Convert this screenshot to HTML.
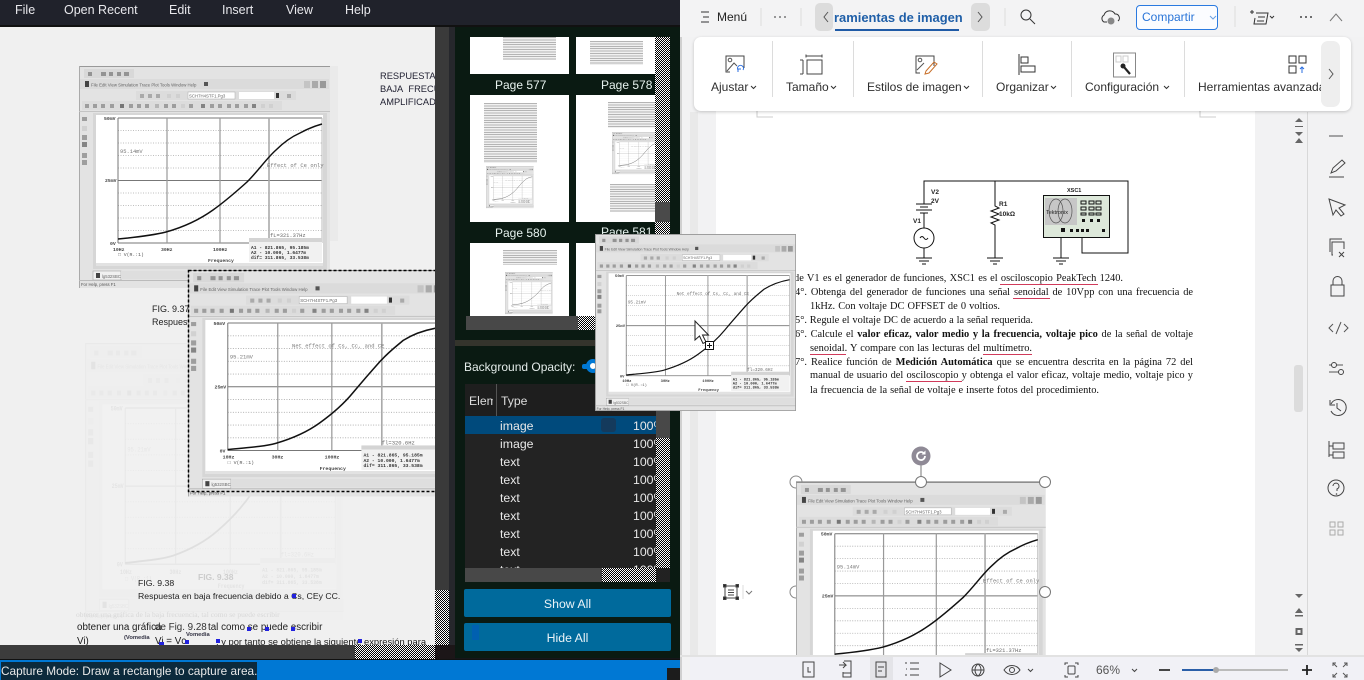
<!DOCTYPE html>
<html lang="es"><head><meta charset="utf-8"><title>Capture</title>
<style>
html,body{margin:0;padding:0;width:1364px;height:680px;overflow:hidden;background:#f1f1f1}
body{font-family:"Liberation Sans",sans-serif;position:relative}
.a{position:absolute}
.chk{background:repeating-conic-gradient(#000 0 25%,#fff 0 50%) 0 0/2px 2px}
.t{position:absolute;white-space:nowrap}
.row{position:absolute;left:465px;width:191px;height:18px;background:#232323;color:#e8e8e8;font-size:12.3px;line-height:20px;overflow:hidden}
.row b{position:absolute;left:35px;font-weight:normal}
.row i{position:absolute;left:168px;font-style:normal}
.lines{position:absolute;background:repeating-linear-gradient(#b4b4b4 0 1px,#f0f0f0 1px 2.4px)}
.thumb{position:absolute;background:#fff;overflow:hidden}
.pl{position:absolute;color:#e6f2ee;font-size:12px;line-height:14px}
.btn{position:absolute;left:464px;width:207px;height:28px;background:#006a9c;border-radius:2px;color:#eaf3f7;font-size:12.3px;line-height:30px;text-align:center}
.mn{position:absolute;top:3px;color:#e8e8ec;font-size:12.5px;line-height:14px}
.rb{position:absolute;top:80px;font-size:12px;line-height:15px;color:#2e2e2e;white-space:nowrap}
.sep{position:absolute;width:1px;background:#dcdcdc}
.d{position:absolute;font:10.4px/12px "Liberation Serif",serif;color:#111;white-space:nowrap;text-align:justify;text-align-last:justify}
.u{position:absolute;height:1px;background:#d03a5a}
svg{position:absolute;overflow:visible}
</style></head><body>

<svg width="0" height="0" style="left:0;top:0">
<defs>
<symbol id="chrome" viewBox="0 0 251 222" width="251" height="222" overflow="visible">
<rect x="0" y="0" width="251" height="222" fill="#e3e3e3"/>
<rect x="0" y="0" width="251" height="1" fill="#999"/><rect x="0" y="0" width="1" height="222" fill="#aaa"/>
<rect x="5" y="3" width="50" height="9" fill="#d8d8d8"/>
<g fill="#777" opacity=".7"><rect x="9" y="6" width="4" height="4"/><rect x="22" y="6" width="5" height="4"/><rect x="30" y="6" width="4" height="4"/><rect x="38" y="6" width="4" height="4"/><rect x="45" y="6" width="5" height="4"/></g>
<rect x="1" y="13" width="249" height="10" fill="#dbdbdb"/>
<rect x="6" y="15" width="4" height="6" fill="#444"/>
<text x="12" y="20.500" font-family="Liberation Sans" font-size="4.300" fill="#666">File  Edit  View  Simulation  Trace  Plot  Tools  Window  Help</text>
<rect x="125" y="16" width="4" height="4" fill="#555"/>
<rect x="225" y="15" width="6" height="7" fill="#c4c4c4"/><rect x="233" y="15" width="6" height="7" fill="#aaa"/><rect x="241" y="15" width="6" height="7" fill="#999"/>
<rect x="57" y="25" width="160" height="9" fill="#dcdcdc"/>
<g fill="#999" opacity=".75"><rect x="61" y="28" width="4" height="4"/><rect x="69" y="28" width="4" height="4"/><rect x="77" y="28" width="4" height="4"/><rect x="88" y="28" width="4" height="4" fill="#ccc"/><rect x="97" y="28" width="4" height="4" fill="#ccc"/></g>
<rect x="109" y="26" width="47" height="7" fill="#fff" stroke="#aaa" stroke-width=".5"/>
<text x="110" y="31.500" font-family="Liberation Sans" font-size="4.300" fill="#666">SCH7H4STF1.Pg3</text>
<rect x="160" y="26" width="35" height="7" fill="#fff"/><rect x="197" y="27" width="3" height="5" fill="#333"/><rect x="208" y="28" width="4" height="4" fill="#aaa"/>
<rect x="3" y="35" width="200" height="9" fill="#dcdcdc"/>
<g fill="#888" opacity=".75"><rect x="6" y="38" width="4" height="4"/><rect x="14" y="38" width="4" height="4"/><rect x="22" y="38" width="4" height="4"/><rect x="31" y="38" width="4" height="4"/><rect x="41" y="38" width="4" height="4" fill="#555"/><rect x="50" y="38" width="4" height="4"/><rect x="58" y="38" width="4" height="4"/><rect x="66" y="38" width="4" height="4"/><rect x="76" y="38" width="4" height="4" fill="#aaa"/><rect x="85" y="38" width="4" height="4"/><rect x="93" y="38" width="4" height="4"/><rect x="102" y="38" width="4" height="4" fill="#ccc"/><rect x="110" y="38" width="4" height="4"/><rect x="122" y="38" width="4" height="4" fill="#666"/><rect x="131" y="38" width="4" height="4"/><rect x="139" y="38" width="4" height="4"/><rect x="148" y="38" width="4" height="4"/><rect x="156" y="38" width="4" height="4"/><rect x="165" y="38" width="4" height="4"/><rect x="173" y="38" width="4" height="4" fill="#666"/><rect x="182" y="38" width="4" height="4" fill="#ccc"/><rect x="190" y="38" width="4" height="4" fill="#ccc"/></g>
<rect x="0" y="45" width="251" height="1" fill="#c4c4c4"/>
<g fill="#888" opacity=".75"><rect x="3" y="51" width="5" height="4"/><rect x="3" y="60" width="5" height="5" fill="#ccc"/><rect x="3" y="69" width="5" height="5"/><rect x="3" y="76" width="5" height="5" fill="#666"/><rect x="3" y="87" width="5" height="5"/><rect x="3" y="94" width="5" height="5"/></g>
<rect x="14" y="47" width="234" height="156" fill="#d6d6d6"/>
<rect x="17" y="49" width="227" height="151" fill="#fff"/>
<rect x="17" y="197" width="227" height="3" fill="#e2e2e2"/>
<g stroke="#aaa" stroke-width=".8" stroke-dasharray="1 1.500">
<path d="M39 64.500H243M39 77H243M39 89.500H243M39 102H243M39 127H243M39 139.500H243M39 152H243M39 164.500H243"/></g>
<path d="M39 52H243M39 114.500H243M39 177H243M39 52V177" stroke="#777" stroke-width="1" fill="none"/>
<path d="M88 52V177M141 52V177" stroke="#999" stroke-width="1.200" fill="none"/>
<path d="M190 52V177" stroke="#aaa" stroke-width="1.600" fill="none"/>
<path d="M243 52V177" stroke="#bbb" stroke-width="1" fill="none"/>
<g font-family="Liberation Mono" font-size="4.800" fill="#444" font-weight="bold">
<text x="25" y="54">50mV</text><text x="26" y="116">25mV</text><text x="31" y="179">0V</text>
<text x="34" y="185">10Hz</text><text x="82" y="185">30Hz</text><text x="134" y="185">100Hz</text><text x="129" y="196">Frequency</text></g>
<text x="39" y="190" font-family="Liberation Mono" font-size="4.800" fill="#555">□ V(R.:1)</text>
<rect x="170" y="172" width="73" height="24" fill="#f1f1f1"/><rect x="170" y="172" width="73" height="4" fill="#d4d4d4"/>
<g font-family="Liberation Mono" font-size="4.600" fill="#333" font-weight="bold"><text x="172" y="183">A1 -  821.865,   95.185m</text><text x="172" y="188">A2 -   10.000,   1.6477m</text><text x="172" y="193">dif=  311.865,   33.538m</text></g>
<rect x="14" y="205" width="28" height="9" fill="#f0f0f0" stroke="#999" stroke-width=".5"/><rect x="17" y="207" width="4" height="5" fill="#444"/>
<text x="23" y="212" font-family="Liberation Sans" font-size="4.200" fill="#666">lg532SBC</text>
<rect x="42" y="205" width="209" height="8" fill="#dedede"/>
<rect x="0" y="214" width="251" height="1" fill="#bbb"/>
<text x="2" y="220" font-family="Liberation Sans" font-size="4.200" fill="#555">For Help, press F1</text>
</symbol>
<symbol id="effect" viewBox="0 0 251 222" width="251" height="222" overflow="visible">
<path d="M39 173C60 171 75 169 87 166C105 161 120 154 134 144C148 134 158 125 168 116C180 104 187 93 197 84C205 76 212 71 221 67C230 62 236 60 243 58" fill="none" stroke="#111" stroke-width="1.500"/>
<text x="41" y="87" font-family="Liberation Mono" font-size="5.400" fill="#777">95.14mV</text>
<text x="188" y="101" font-family="Liberation Mono" font-size="5.400" fill="#777" letter-spacing=".1">Effect of Ce only</text>
<text x="191" y="171" font-family="Liberation Mono" font-size="5.400" fill="#666">fL=321.37Hz</text>
</symbol>
<symbol id="net" viewBox="0 0 251 222" width="251" height="222" overflow="visible">
<path d="M39 176C60 174 75 173 86 170C103 165 118 158 129 150C143 140 153 131 162 120C172 108 180 99 188 90C197 80 204 75 211 69C222 62 232 59 243 57" fill="none" stroke="#111" stroke-width="1.500"/>
<text x="41" y="87" font-family="Liberation Mono" font-size="5.400" fill="#777">95.21mV</text>
<text x="102" y="76" font-family="Liberation Mono" font-size="5.400" fill="#777">Net effect of Cs, Cc, and CE</text>
<text x="190" y="171" font-family="Liberation Mono" font-size="5.400" fill="#666">fl=320.6Hz</text>
</symbol>
</defs></svg>

<!-- LEFT VIEWER PAGE -->
<div class="a" style="left:0;top:27px;width:435px;height:618px;background:#f0f0f0;overflow:hidden">
  <svg width="435" height="618" style="left:0;top:0">
    <g opacity=".07" transform="translate(85 316) scale(1.03 1.25)"><use href="#chrome"/><use href="#net"/></g>
  </svg>
  <div class="a" style="left:330px;top:39px;width:8px;height:175px;background:#eaeaea"></div>
  <svg width="435" height="618" style="left:0;top:0"><g transform="translate(79 39)"><use href="#chrome"/><use href="#effect"/></g></svg>
  <div class="t" style="left:380px;top:43px;font-size:9.300px;line-height:13px;color:#223">RESPUESTA<br>BAJA&nbsp; FRECUENCIA<br>AMPLIFICADOR</div>
  <div class="t" style="left:152px;top:276px;font-size:9px;line-height:13px;color:#222">FIG. 9.37<br>Respuesta</div>
  <div class="t" style="left:198px;top:545px;font-size:8.500px;font-weight:bold;color:#ccc">FIG. 9.38</div>
  <div class="t" style="left:138px;top:550px;font-size:8.700px;line-height:13px;color:#222">FIG. 9.38<br>Respuesta en baja frecuencia debido a Cs, CEy CC.</div>
  <div class="a" style="left:292px;top:567px;width:4px;height:4px;background:#2222dd"></div>
  <div class="t" style="left:76px;top:583px;font:7.500px 'Liberation Serif',serif;color:#d8d8d8">obtener una gráfica de la baja frecuencia, tal como se puede escribir</div>
  <div class="t" style="left:77px;top:595px;font-size:9.800px;color:#1b1b1b">obtener una gráfica</div>
  <div class="t" style="left:155px;top:595px;font-size:9.800px;color:#333">de Fig. 9.28</div>
  <div class="t" style="left:208px;top:595px;font-size:9.800px;color:#222">tal como se puede escribir</div>
  <div class="t" style="left:77px;top:609px;font-size:9.800px;color:#1b1b1b">Vi)</div>
  <div class="t" style="left:124px;top:608px;font-size:5.800px;font-weight:bold;color:#334">(Vomedia</div>
  <div class="t" style="left:155px;top:609px;font-size:9.800px;color:#1b1b1b">Vi = Vc</div>
  <div class="t" style="left:186px;top:605px;font-size:5.800px;font-weight:bold;color:#334">Vomedia</div>
  <div class="t" style="left:216px;top:609px;font-size:9.400px;color:#1b1b1b">, y por tanto se obtiene la siguiente expresión para</div>
  <div class="a" style="left:159px;top:615px;width:5px;height:5px;background:#2222dd"></div>
  <div class="a" style="left:185px;top:613px;width:4px;height:4px;background:#2222dd"></div>
  <div class="a" style="left:216px;top:612px;width:4px;height:4px;background:#2222dd"></div>
  <div class="a" style="left:358px;top:612px;width:4px;height:4px;background:#2222dd"></div>
  <div class="a" style="left:247px;top:600px;width:4px;height:4px;background:#2222dd"></div>
  <div class="a" style="left:265px;top:600px;width:4px;height:4px;background:#2222dd"></div>
  <div class="a" style="left:291px;top:600px;width:4px;height:4px;background:#2222dd"></div>
  <!-- capture rectangle -->
  <svg width="435" height="618" style="left:0;top:0"><g transform="translate(188 243) scale(1.02)"><use href="#chrome"/><use href="#net"/></g>
  <rect x="188.500" y="243.500" width="260" height="221" fill="none" stroke="#000" stroke-width="1.500" stroke-dasharray="3 2"/></svg>
</div>

<!-- MENU BAR -->
<div class="a" style="left:0;top:0;width:680px;height:27px;background:#20222b"></div>
<div class="a" style="left:0;top:25px;width:680px;height:2px;background:#111"></div>
<div class="mn" style="left:15px">File</div><div class="mn" style="left:64px">Open Recent</div><div class="mn" style="left:169px">Edit</div><div class="mn" style="left:222px">Insert</div><div class="mn" style="left:286px">View</div><div class="mn" style="left:345px">Help</div>

<!-- middle column -->
<div class="a" style="left:435px;top:27px;width:245px;height:633px;background:#3a3a3a"></div>
<div class="a" style="left:449px;top:27px;width:6px;height:633px;background:#26272c"></div>
<div class="a" style="left:455px;top:27px;width:225px;height:313px;background:#0a1a12"></div>
<div class="a" style="left:455px;top:340px;width:225px;height:6px;background:#34342c"></div>
<div class="a" style="left:455px;top:346px;width:225px;height:312px;background:#0a1a12"></div>
<div class="a" style="left:455px;top:658px;width:225px;height:2px;background:#16161a"></div>
<div class="a" style="left:0;top:645px;width:355px;height:14px;background:#3c3c3c"></div>
<div class="a chk" style="left:355px;top:645px;width:80px;height:14px"></div>
<div class="a chk" style="left:435px;top:590px;width:14px;height:55px"></div>
<div class="a" style="left:435px;top:645px;width:20px;height:15px;background:#1c1618"></div>
<div class="a" style="left:0;top:659px;width:680px;height:1px;background:#111"></div>

<!-- thumbnails -->
<div class="thumb" style="left:470px;top:37px;width:99px;height:37px"><div class="lines" style="left:33px;top:0;width:53px;height:23px"></div></div>
<div class="thumb" style="left:576px;top:37px;width:79px;height:37px"><div class="lines" style="left:14px;top:4px;width:53px;height:24px"></div></div>
<div class="pl" style="left:495px;top:78px">Page 577</div><div class="pl" style="left:601px;top:78px">Page 578</div>
<div class="thumb" style="left:470px;top:95px;width:99px;height:127px">
  <div class="lines" style="left:14px;top:8px;width:53px;height:60px"></div>
  <svg width="99" height="127" style="left:0;top:0"><g transform="translate(16 71) scale(.19)"><use href="#chrome"/><use href="#net"/></g></svg>
</div>
<div class="thumb" style="left:576px;top:95px;width:79px;height:127px">
  <div class="lines" style="left:32px;top:7px;width:47px;height:26px"></div>
  <svg width="79" height="127" style="left:0;top:0"><g transform="translate(36 37) scale(.19)"><use href="#chrome"/><use href="#net"/></g></svg>
  <div class="lines" style="left:34px;top:89px;width:45px;height:28px"></div>
</div>
<div class="pl" style="left:495px;top:226px">Page 580</div><div class="pl" style="left:601px;top:225px">Page 581</div>
<div class="thumb" style="left:470px;top:243px;width:99px;height:73px">
  <div class="lines" style="left:33px;top:7px;width:54px;height:15px"></div>
  <svg width="99" height="73" style="left:0;top:0"><g transform="translate(35 29) scale(.19)"><use href="#chrome"/><use href="#effect"/></g></svg>
</div>
<div class="thumb" style="left:576px;top:243px;width:79px;height:73px"></div>
<div class="a chk" style="left:655px;top:37px;width:15px;height:165px"></div>
<div class="a" style="left:655px;top:202px;width:15px;height:20px;background:#4a4a4a"></div>
<div class="a chk" style="left:655px;top:222px;width:15px;height:14px"></div>
<div class="a" style="left:466px;top:316px;width:112px;height:14px;background:#484848"></div>
<div class="a chk" style="left:578px;top:316px;width:18px;height:14px"></div>

<!-- layers panel -->
<div class="t" style="left:464px;top:360px;font-size:12px;line-height:14px;color:#e4ecea">Background Opacity:</div>
<div class="a" style="left:582px;top:364px;width:12px;height:5px;background:#0078d4;border-radius:2px"></div>
<div class="a" style="left:586px;top:359px;width:6px;height:6px;background:#fff;border:4px solid #0078d4;border-radius:50%"></div>
<div class="a" style="left:465px;top:384px;width:191px;height:32px;background:#1e1e1e"></div>
<div class="a" style="left:496px;top:384px;width:1px;height:32px;background:#555"></div>
<div class="t" style="left:469px;top:394px;width:24px;overflow:hidden;font-size:12.200px;color:#ddd">Element</div>
<div class="t" style="left:501px;top:394px;font-size:12.200px;color:#ddd">Type</div>
<div class="row" style="top:416px;background:#004a7c"><b>image</b><i>100%</i><span class="a" style="left:136px;top:2px;width:15px;height:14px;background:#143a5c;border-radius:3px"></span></div>
<div class="row" style="top:434px;height:18px"><b>image</b><i>100%</i></div>
<div class="row" style="top:452px"><b>text</b><i>100%</i></div>
<div class="row" style="top:470px"><b>text</b><i>100%</i></div>
<div class="row" style="top:488px"><b>text</b><i>100%</i></div>
<div class="row" style="top:506px"><b>text</b><i>100%</i></div>
<div class="row" style="top:524px"><b>text</b><i>100%</i></div>
<div class="row" style="top:542px"><b>text</b><i>100%</i></div>
<div class="row" style="top:560px;height:8px"><b>text</b><i>100%</i></div>
<div class="a" style="left:656px;top:410px;width:14px;height:28px;background:#484848"></div>
<div class="a chk" style="left:656px;top:438px;width:14px;height:130px"></div>
<div class="a" style="left:465px;top:568px;width:137px;height:14px;background:#484848"></div>
<div class="a chk" style="left:602px;top:568px;width:54px;height:14px"></div>
<div class="a" style="left:656px;top:568px;width:14px;height:14px;background:#222"></div>
<div class="btn" style="top:589px">Show All</div>
<div class="btn" style="top:623px">Hide All<span class="a" style="left:8px;top:2px;width:7px;height:15px;background:#0060b0"></span></div>

<!-- status -->
<div class="a" style="left:0;top:660px;width:680px;height:20px;background:#0078d4"></div>
<div class="a" style="left:1px;top:662px;width:256px;height:18px;background:#0c2a3c;color:#e8e8e8;font-size:11.800px;line-height:19px;white-space:nowrap;overflow:hidden">Capture Mode: Draw a rectangle to capture area.</div>
<div class="a" style="left:667px;top:668px;width:13px;height:12px;background:#1c1c1c"></div>

<!-- RIGHT APP -->
<div class="a" style="left:680px;top:0;width:684px;height:680px;background:#f2f2f3"></div>
<div class="a" style="left:680px;top:0;width:2px;height:680px;background:#d0d0d0"></div>
<div class="a" style="left:690px;top:112px;width:8px;height:545px;background:#e9e9e9"></div>
<div class="a" style="left:716px;top:100px;width:539px;height:557px;background:#fff"></div>
<div class="a" style="left:1307px;top:112px;width:1px;height:545px;background:#d8d8d8"></div>
<svg width="684" height="680" style="left:680px;top:0">
  <path d="M77 108V117H93M520 108V117H536" fill="none" stroke="#ccc"/>
</svg>

<!-- Circuit -->
<svg width="260" height="100" style="left:900px;top:170px">
 <g fill="none" stroke="#111" stroke-width="1">
  <path d="M24 29V11H228V83H182V53"/>
  <path d="M24 29V34M16 34H32M20 37H28M16 40H32M20 43H28M24 43V58M24 78V88"/>
  <circle cx="24" cy="68" r="10"/><path d="M20 68q2-3 4 0t4 0" />
  <path d="M16 88H32M19 91H29M22 94H26"/>
  <path d="M95 11V36l4 2-8 3 8 3-8 3 8 3-8 3 4 2V88M87 88H103M90 91H100M93 94H97"/>
  <path d="M164 53V62M168 53V61M172 53V61M182 53V61M161 60V88M153 88H169M156 91H166M159 94H163" />
 </g>
 <g font-family="Liberation Sans" font-size="6.500" font-weight="bold" fill="#222">
  <text x="31" y="24">V2</text><text x="31" y="33">2V</text><text x="13" y="53">V1</text><text x="99" y="36">R1</text><text x="99" y="46">10kΩ</text><text x="167" y="22" font-size="5.500">XSC1</text>
 </g>
 <rect x="143.500" y="25.500" width="66" height="42" fill="#dde8da" stroke="#111"/>
 <rect x="145" y="28" width="32" height="27" fill="#c7c7c7"/>
 <ellipse cx="156" cy="41" rx="7" ry="12" fill="none" stroke="#555" stroke-width=".7"/><ellipse cx="165" cy="41" rx="7" ry="12" fill="none" stroke="#555" stroke-width=".7"/>
 <text x="146" y="44" font-family="Liberation Sans" font-size="5.500" fill="#222">Tektronix</text>
 <g fill="none" stroke="#111"><path d="M181 31h5v3h-5zM189 31h5v3h-5zM196 31h5v3h-5zM181 37h5v3h-5zM189 37h5v3h-5zM196 37h5v3h-5zM181 43h5v2h-5zM189 43h5v2h-5zM196 43h5v2h-5z"/></g>
 <g fill="#111"><rect x="182" y="49" width="3" height="3"/><rect x="190" y="49" width="3" height="3"/><rect x="197" y="49" width="3" height="3"/><rect x="161" y="58" width="4" height="4"/><rect x="170" y="59" width="3" height="3"/><rect x="176" y="59" width="3" height="3"/><rect x="181" y="59" width="3" height="3"/><rect x="186" y="59" width="3" height="3"/><rect x="202" y="59" width="3" height="3"/></g>
</svg>

<!-- Doc text -->
<div class="d" style="left:794px;top:273px;width:329px">de V1 es el generador de funciones, XSC1 es el osciloscopio PeakTech 1240.</div>
<div class="d" style="left:795px;top:287px;width:398px">4°. Obtenga del generador de funciones una señal senoidal de 10Vpp con una frecuencia de</div>
<div class="d" style="left:810px;top:301px;width:190px">1kHz. Con voltaje DC OFFSET de 0 voltios.</div>
<div class="d" style="left:795px;top:315px;width:238px">5°. Regule el voltaje DC de acuerdo a la señal requerida.</div>
<div class="d" style="left:795px;top:329px;width:398px">6°. Calcule el <b>valor eficaz, valor medio y la frecuencia, voltaje pico</b> de la señal de voltaje</div>
<div class="d" style="left:810px;top:343px;width:222px">senoidal. Y compare con las lecturas del multímetro.</div>
<div class="d" style="left:795px;top:357px;width:398px">7°. Realice función de <b>Medición Automática</b> que se encuentra descrita en la página 72 del</div>
<div class="d" style="left:810px;top:370px;width:383px">manual de usuario del osciloscopio y obtenga el valor eficaz, voltaje medio, voltaje pico y</div>
<div class="d" style="left:810px;top:385px;width:289px">la frecuencia de la señal de voltaje e inserte fotos del procedimiento.</div>
<div class="u" style="left:1000px;top:284px;width:98px"></div>
<div class="u" style="left:1013px;top:298px;width:37px"></div>
<div class="u" style="left:810px;top:354px;width:36px"></div>
<div class="u" style="left:983px;top:354px;width:49px"></div>
<div class="u" style="left:906px;top:381px;width:56px"></div>

<!-- Selected image in doc -->
<div class="a" style="left:716px;top:440px;width:539px;height:217px;overflow:hidden">
<svg width="539" height="217" style="left:0;top:0">
  <circle cx="80" cy="42" r="6" fill="#fff" stroke="#888"/><circle cx="80" cy="152" r="6" fill="#fff" stroke="#888"/>
  <g transform="translate(80 42) scale(.995)"><use href="#chrome"/><use href="#effect"/></g>
  <path d="M80 42H329" stroke="#888" stroke-width="1.200"/>
  <path d="M205 25V36" stroke="#777"/>
  <circle cx="205" cy="16" r="9.500" fill="#8f8a96"/>
  <path d="M209 16a4 4 0 1 1-1.500-3.100" fill="none" stroke="#fff" stroke-width="1.800"/><path d="M209.500 10.500V14.500H205.500" fill="#fff"/>
  <circle cx="205" cy="42" r="5.500" fill="#fff" stroke="#777"/><circle cx="329" cy="42" r="5.500" fill="#fff" stroke="#777"/><circle cx="329" cy="152" r="5.500" fill="#fff" stroke="#777"/>
  <g fill="none" stroke="#444" stroke-width="1">
   <rect x="9" y="146" width="12" height="12"/><path d="M12 150h6M12 152.500h6M12 155h6"/>
   <rect x="7.500" y="144.500" width="2.500" height="2.500" fill="#222"/><rect x="20" y="144.500" width="2.500" height="2.500" fill="#222"/><rect x="7.500" y="157" width="2.500" height="2.500" fill="#222"/><rect x="20" y="157" width="2.500" height="2.500" fill="#222"/>
   <path d="M27 145V159" stroke="#ddd"/><path d="M30 151l3 3 3-3" stroke="#777"/>
  </g>
</svg></div>

<!-- Top row -->
<div class="a" style="left:680px;top:0;width:684px;height:37px;background:#f3f3f4"></div>
<div class="t" style="left:717px;top:10px;font-size:12px;line-height:14px;color:#222">Menú</div>
<div class="a" style="left:815px;top:3px;width:18px;height:28px;background:#dcdcdc;border-radius:5px"></div>
<div class="a" style="left:971px;top:3px;width:19px;height:28px;background:#dcdcdc;border-radius:5px"></div>
<div class="t" style="left:834px;top:10px;font-size:12.950px;line-height:16px;font-weight:bold;color:#1f5fa8;width:132px;overflow:hidden">ramientas de imagen</div>
<div class="a" style="left:835px;top:29px;width:124px;height:2px;background:#1f5aa6"></div>
<div class="a" style="left:1136px;top:5px;width:80px;height:23px;border:1px solid #2a7ae0;border-radius:4px;background:#fbfcff"></div>
<div class="t" style="left:1142px;top:10px;font-size:12px;line-height:14px;color:#2a75d8">Compartir</div>
<svg width="684" height="38" style="left:680px;top:0">
 <g fill="none" stroke="#333" stroke-width="1">
  <path d="M21 12h8M23 17h6M21 22h8"/>
  <path d="M81 8V26M121 8V26M325 8V26M555 6V27" stroke="#ddd"/>
  <path d="M148 12l-4 5 4 5M298 12l4 5-4 5" stroke="#555"/>
  <circle cx="346" cy="15" r="5"/><path d="M350 19l5 5"/>
  <path d="M427 22h-3a4 4 0 0 1 0-7 6 6 0 0 1 11-1 4 4 0 0 1 3 7" />
  <path d="M530 16l3 3 3-3" stroke="#6a9fe0"/>
  <path d="M574 12h-4M572 10v4M576 13h12l-2 11h-12l1-6M578 17h7M577 21h7" />
  <path d="M590 16l2 2 2-2" />
  <path d="M650 21l6-7 6 7" stroke="#777"/>
 </g>
 <circle cx="431" cy="21" r="3.500" fill="#888"/>
 <g fill="#555"><circle cx="95" cy="17" r=".9"/><circle cx="100" cy="17" r=".9"/><circle cx="105" cy="17" r=".9"/></g>
 <g fill="#444"><circle cx="621" cy="17" r="1"/><circle cx="626" cy="17" r="1"/><circle cx="631" cy="17" r="1"/></g>
</svg>

<!-- Ribbon card -->
<div class="a" style="left:694px;top:37px;width:657px;height:74px;background:#fff;border-radius:7px;box-shadow:0 1px 3px rgba(0,0,0,.2)"></div>
<div class="sep" style="left:772px;top:41px;height:56px"></div><div class="sep" style="left:853px;top:41px;height:56px"></div><div class="sep" style="left:982px;top:41px;height:56px"></div><div class="sep" style="left:1071px;top:41px;height:56px"></div><div class="sep" style="left:1184px;top:41px;height:56px"></div>
<div class="a" style="left:1321px;top:41px;width:19px;height:66px;background:#eeeeee;border-radius:7px"></div>
<div class="rb" style="left:711px">Ajustar</div><div class="rb" style="left:786px">Tamaño</div><div class="rb" style="left:867px">Estilos de imagen</div><div class="rb" style="left:996px">Organizar</div><div class="rb" style="left:1085px">Configuración</div>
<div class="rb" style="left:1198px;width:123px;overflow:hidden">Herramientas avanzadas</div>
<svg width="684" height="112" style="left:680px;top:0">
 <g fill="none" stroke="#555" stroke-width="1">
  <path d="M71 86l2.500 2.500 2.500-2.500M151 86l2.500 2.500 2.500-2.500M284 86l2.500 2.500 2.500-2.500M371 86l2.500 2.500 2.500-2.500M484 86l2.500 2.500 2.500-2.500" stroke="#333"/>
  <path d="M50 72h-4V56h18v12" stroke="#444"/><circle cx="50" cy="60" r="1.800"/><path d="M47 71l7-8 3 3" />
  <path d="M58 70a3 3 0 1 1 5 0M58 72v-3h3" stroke="#2a6ee0"/>
  <path d="M126 56h16M126 54.500v3M142 54.500v3M123 60v14M120 60h3M120 74h3M127 60h15v14h-15z" stroke="#444"/>
  <path d="M240 73h-4V56h18v10" stroke="#444"/><circle cx="240" cy="60" r="1.800"/><path d="M237 70l7-7" />
  <path d="M246 71l8-9 3 2-8 9-4 1z" stroke="#c8702a"/>
  <path d="M339 54V75M341 57h7v6h-7zM341 66h14v6h-14z" stroke="#333"/>
  <rect x="433.500" y="53" width="22" height="24" stroke="#888"/><path d="M436 56h5v6h-5zM443 56h5v6h-5z" stroke="#ccc"/>
  <path d="M444 67l6 7" stroke="#222" stroke-width="2.200"/><circle cx="443" cy="66" r="2.500" fill="#222" stroke="none"/>
  <path d="M609 56h7v7h-7zM619 56h7v7h-7zM609 66h7v7h-7z" stroke="#333"/><path d="M622 73v-6M620 69l2-2 2 2" stroke="#2a6ee0"/>
  <path d="M649 69l4 5-4 5" stroke="#555"/>
 </g>
</svg>

<!-- Right sidebar -->
<svg width="60" height="570" style="left:1284px;top:110px">
 <g fill="none" stroke="#444" stroke-width="1">
  <path d="M45 26h14" stroke="#888" stroke-width="1.500"/>
  <path d="M45 67h15M47 63l2-5 9-8 3 3-9 8-5 2z"/>
  <path d="M45 89l16 6-6 3 5 6-3 2-5-6-3 5z"/>
  <path d="M46 142v-13h12M49 145h-1v-13h12v7M55 142l5 5M60 142l-5 5"/>
  <path d="M47 186h13v-11h-13zM49 175v-4a4.500 4.500 0 0 1 9 0v4"/>
  <path d="M49 214l-4 4 4 4M60 214l4 4-4 4M57 212l-5 12" stroke="#555"/>
  <path d="M45 255h14M45 262h14" stroke="#555"/><circle cx="50" cy="255" r="2.500" fill="#f2f2f3"/><circle cx="57" cy="262" r="2.500" fill="#f2f2f3"/>
  <path d="M47 294a8 8 0 1 1 0 7M46 290v5h5M53 293v5l4 3"/>
  <path d="M45 331v16M45 336h4M45 345h4M49 333h11v6h-11zM49 342h11v6h-11z"/>
  <circle cx="52" cy="378" r="8"/>
  <path d="M49 376a3 3 0 1 1 4 3v2" />
  <path d="M46 412h5v5h-5zM54 412h5v5h-5zM46 420h5v5h-5zM54 420h5v5h-5z" stroke="#aaa"/>
 </g>
 <circle cx="52.500" cy="384" r=".8" fill="#444"/>
 <g fill="#666">
  <path d="M11 12h8l-4-4zM11 17h8v-1h-8zM11 22h8l-4 4zM11 33h8l-4-5z"/>
  <path d="M11 484h8l-4 4zM11 503h8l-4-5zM11 505h8v1.500h-8z"/>
  <path d="M11.500 518h7v7h-7zM13.500 520v3h3v-3z" fill-rule="evenodd"/>
  <path d="M11 534h8v1.500h-8zM11 538h8l-4 4z"/>
 </g>
 <rect x="10" y="255" width="9" height="47" rx="3" fill="#dcdcdc"/>
</svg>

<!-- Bottom bar -->
<div class="a" style="left:690px;top:657px;width:674px;height:23px;background:#f1f1f6"></div>
<div class="a" style="left:680px;top:655px;width:684px;height:2px;background:#e2e2e2"></div>
<div class="a" style="left:870px;top:657px;width:23px;height:23px;background:#e4e4e8"></div>
<div class="t" style="left:1096px;top:663px;font-size:12px;line-height:14px;color:#555">66%</div>
<svg width="684" height="24" style="left:680px;top:655px">
 <g fill="none" stroke="#444" stroke-width="1">
  <path d="M123 7h11v15h-11zM128 12v5h3"/>
  <path d="M159 10h7l-3-3M166 10l-3 3M164 6h7v16h-8v-5M163 18h8" />
  <path d="M196 7h10v15h-10zM198 12h6M198 16h4"/>
  <path d="M225 8h2M230 8h9M226 14h1M230 14h9M225 20h2M230 20h9"/>
  <path d="M260 8l11 7-11 7z"/>
  <circle cx="298" cy="15" r="6"/><path d="M292 15h12M298 9c-4 3-4 9 0 12M298 9c4 3 4 9 0 12"/>
  <path d="M324 15c4-6 12-6 16 0-4 6-12 6-16 0z"/><circle cx="332" cy="15" r="2.500"/>
  <path d="M348 14l2.500 2.500 2.500-2.500M452 14l2.500 2.500 2.500-2.500"/>
  <path d="M385 10V8h3M395 8h3v2M398 20v2h-3M388 22h-3v-2"/><rect x="388" y="11" width="7" height="8" rx="1"/>
  <path d="M479 15h11" stroke-width="1.800" stroke="#333"/>
  <path d="M622 15h10M627 10v10" stroke-width="1.800" stroke="#222"/>
  <path d="M656 8h-3v3M653 8l4 4M664 22h3v-3M667 22l-4-4M664 8h3v3M667 8l-4 4M656 22h-3v-3M653 22l4-4" stroke="#555"/>
 </g>
 <rect x="502" y="14" width="34" height="2" fill="#2a5ea8"/>
 <rect x="536" y="14" width="72" height="2" fill="#bbb"/>
 <circle cx="536" cy="15" r="3" fill="#aaa"/>
</svg>

<!-- floating capture preview -->
<svg width="201" height="177" viewBox="0 0 251 221" style="left:595px;top:234px;overflow:hidden"><use href="#chrome"/><use href="#net"/><rect x=".5" y=".5" width="250" height="220" fill="none" stroke="#999"/></svg>
<svg width="30" height="40" style="left:690px;top:318px">
 <path d="M5 3V22L9.500 18 13 25.500 16 24 12.500 17H18.500z" fill="#fff" stroke="#222" stroke-width="1"/>
 <rect x="15.500" y="23.500" width="8" height="8" fill="#fff" stroke="#111"/><path d="M19.500 25V30M17 27.500H22" stroke="#111"/>
</svg>
</body></html>
